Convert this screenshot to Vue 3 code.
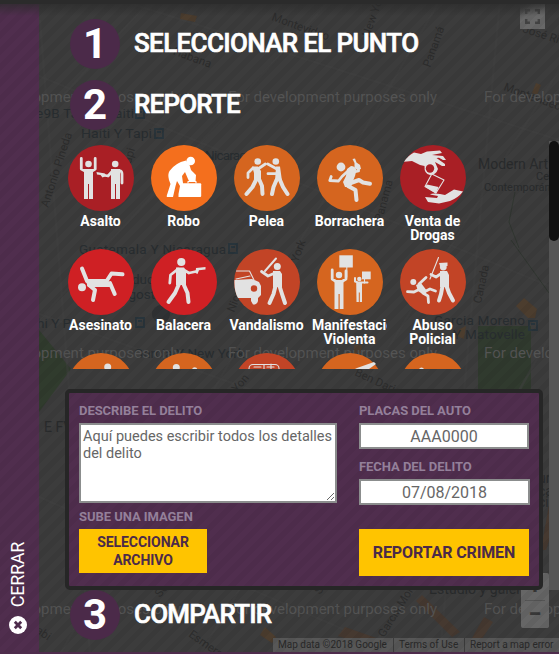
<script setup>
import { ref } from 'vue'

const description = ref('')
const plates = ref('')
const date = ref('07/08/2018')

const crimes = [
  { id: 'asalto', label: ['Asalto'], color: '#a91f25' },
  { id: 'robo', label: ['Robo'], color: '#f46f1d', active: true },
  { id: 'pelea', label: ['Pelea'], color: '#d5651f' },
  { id: 'borrachera', label: ['Borrachera'], color: '#d5651f' },
  { id: 'drogas', label: ['Venta de', 'Drogas'], color: '#a91f25' },
  { id: 'asesinato', label: ['Asesinato'], color: '#cf2024' },
  { id: 'balacera', label: ['Balacera'], color: '#cf2024' },
  { id: 'vandalismo', label: ['Vandalismo'], color: '#c24426' },
  { id: 'manifestacion', label: ['Manifestación', 'Violenta'], color: '#d5651f' },
  { id: 'abuso', label: ['Abuso', 'Policial'], color: '#c24426' },
  { id: 'r1', label: [], color: '#d5651f' },
  { id: 'r2', label: [], color: '#d5651f' },
  { id: 'r3', label: [], color: '#c24426' },
  { id: 'r4', label: [], color: '#d5651f' },
  { id: 'r5', label: [], color: '#d5651f' },
]

const watermarks = [-28, 228, 484]
const streets = [
  'M0 165L150 0', 'M30 330L330 0', 'M60 654L440 0', 'M200 654L559 70', 'M370 654L559 320',
  'M0 60L559 290', 'M120 0L559 140', 'M0 300L559 500', 'M0 480L400 654', 'M40 20L90 654', 'M500 0L440 654',
]
</script>

<template>
  <div class="app">
    <svg class="map" viewBox="0 0 559 654" width="559" height="654">
      <rect width="559" height="654" fill="#3c3c3c" />
      <path d="M39 330L71 369L39 412Z" fill="#303b2d" />
      <path d="M478 326H531V389H478Z" fill="#303a2e" />
      <path v-for="d in streets" :key="d" :d="d" class="street" />
      <path d="M511 240L549 293M515 192L509 222L519 248" stroke="#303630" fill="none" />
      <g fill="#4c3d2e">
        <path d="M181 13L197 16L195 22L180 19Z" />
        <path d="M536 83L541 85L537 95L532 93Z" />
        <path d="M524 298L537 309L535 318H528L516 306Z" />
        <path d="M458 330L466 326L464 339L457 336Z" />
        <path d="M265 627L276 637L272 643L260 635Z" />
        <path d="M354 345L362 345L361 353L354 353Z" />
      </g>
      <g fill="#463930">
        <path d="M345 627L382 640L377 648L338 636ZM484 617L493 622L478 645H468ZM422 595L460 632L452 637L416 601Z" />
        <path d="M549 505L559 510L546 550L541 550Z" />
      </g>
      <g class="place">
        <text x="36" y="118" textLength="98">e9B Tapi Y Haiti</text>
        <text x="81" y="138" textLength="71" lengthAdjust="spacingAndGlyphs">Haiti Y Tapi</text>
        <text x="162" y="160" textLength="98">nama Y Nicaragua</text>
        <text x="79" y="254" textLength="147">Guatemala Y Nicaragua</text>
        <text x="79" y="284">Unidad Educativa</text>
        <text x="83" y="299">24 de Agosto</text>
        <text x="30" y="328">chi Y Panama</text>
        <text x="134" y="358">Garcia Y New York</text>
        <text x="434" y="325" textLength="91">Garcia Moreno</text>
        <text x="453" y="339" textLength="72">Y Matovelle</text>
      </g>
      <g class="poi">
        <text x="478" y="169" textLength="70">Modern Art</text>
        <text x="536" y="180" class="sm">Ce</text>
        <text x="484" y="191" class="sm">Contemporáneo</text>
        <text x="44" y="432">E FV</text>
        <text x="429" y="594" textLength="92">Estudio y galer</text>
        <text x="538" y="483">ur</text><text x="538" y="496">ca</text><text x="538" y="507">cio</text>
      </g>
      <g class="road">
        <text transform="translate(158 49) rotate(20)">La Habana</text>
        <text transform="translate(271 20) rotate(20)">Montevideo</text>
        <text transform="translate(503 90) rotate(20)">Montevideo</text>
        <text transform="translate(522 32) rotate(18)">José Rica</text>
        <text transform="translate(430 68) rotate(-70)">Panamá</text>
        <text transform="translate(369 38) rotate(-70)">New York</text>
        <text transform="translate(48 208) rotate(-72)">Antonio Pineda</text>
        <text transform="translate(129 170) rotate(-74)">Tapi</text>
        <text transform="translate(382 222) rotate(-75)">Panama</text>
        <text transform="translate(481 304) rotate(-78)">Canada</text>
        <text transform="translate(234 313) rotate(-68)">Nicaragua</text>
        <text transform="translate(298 263) rotate(-70)">York</text>
        <text transform="translate(354 375) rotate(25)">Ben Dario</text>
        <text transform="translate(237 393) rotate(-50)">Yon</text>
        <text transform="translate(188 636) rotate(35)">Esmeraldas</text>
        <text transform="translate(35 632) rotate(35)">abi</text>
        <text transform="translate(160 598) rotate(-50)">Seca</text>
        <text transform="translate(320 595) rotate(-55)">Sene</text>
        <text transform="translate(384 638) rotate(-58)">García Moreno</text>
      </g>
      <g class="station">
        <path d="M155 129h8v9h-8zM136 109h8v9h-8zM229 244h8v9h-8zM529 321h8v9h-8zM136 318h8v9h-8z" />
        <path d="M157 132h4M138 112h4M231 247h4M531 324h4M138 321h4" />
      </g>
      <circle cx="161" cy="314" r="9" fill="#303234" />
      <text v-for="x in watermarks" :key="'a' + x" :x="x" y="102" class="watermark" textLength="209">For development purposes only</text>
      <text v-for="x in watermarks" :key="'b' + x" :x="x" y="358" class="watermark" textLength="209">For development purposes only</text>
      <text v-for="x in watermarks" :key="'c' + x" :x="x" y="614" class="watermark" textLength="209">For development purposes only</text>
    </svg>

    <div class="fullscreen">
      <svg width="25" height="25" viewBox="0 0 25 25"><path d="M6.2 10V6.2H10M15 6.2H18.8V10M18.8 15V18.8H15M10 18.8H6.2V15" /></svg>
    </div>
    <div class="zoom"><span>+</span><i></i><span>−</span></div>
    <div class="credits"><span>Map data ©2018 Google</span><span>Terms of Use</span><span>Report a map error</span></div>
    <div class="stripes"></div>

    <aside class="close">
      <span class="close-text">CERRAR</span>
      <svg width="18" height="18" viewBox="0 0 18 18"><circle cx="9" cy="9" r="9" fill="#fff" /><path d="M5.8 5.8L12.2 12.2M12.2 5.8L5.8 12.2" stroke="#4e2c4c" stroke-width="2.8" /></svg>
    </aside>

    <main class="panel">
      <header class="step"><b class="num">1</b><h2>SELECCIONAR EL PUNTO</h2></header>
      <header class="step second"><b class="num">2</b><h2>REPORTE</h2></header>

      <section class="crimes">
        <div v-for="c in crimes" :key="c.id" class="crime">
          <svg width="66" height="66" viewBox="0 0 66 66" class="icon" :class="{ active: c.active }">
            <circle cx="33" cy="33" r="33" :fill="c.color" />
            <g v-if="c.id === 'asalto'">
              <circle cx="20.5" cy="19" r="3.3" class="f" />
              <path class="f" d="M16 24H25V54H21V39H20V54H16ZM43 24H52V54H48V39H47V54H43Z" />
              <path class="l3" d="M13.3 13.5V24L17 26M27.2 13.5V24L24 26M51.5 25.5Q54 26 54 29V38M45 25.5L40 31L35 30" />
              <path class="f" d="M28.5 27L37 28.5L38 31L34.5 32.5L32.5 30L29 29.5Z" />
              <circle cx="47.2" cy="19" r="3.3" class="f" />
            </g>
            <g v-else-if="c.id === 'robo'">
              <circle cx="39.7" cy="16" r="4.3" class="f" />
              <path class="f" d="M35 15.5Q24 18 18.5 26Q16.5 29 18 35L19.5 39L15.8 50.5V52H22L24.5 41L26 36L29 41L27.5 49V52H32V38L31 31L34 27L37 34L38.5 37H44.5L45 30L40 25L38.5 20Z" />
              <rect x="31.2" y="38.3" width="19" height="13.7" rx="1" class="f" />
              <path d="M37 38V36.5H45V38" class="l1" />
            </g>
            <g v-else-if="c.id === 'pelea'">
              <circle cx="23.7" cy="16.5" r="3.3" class="f" /><circle cx="41.8" cy="16.5" r="3.3" class="f" />
              <path class="f" d="M18 21.5H24L27 26V36H20V28Z M42 21.5H46L48 36H41Z" />
              <path class="l3" d="M19 23L14 28V32.5M24 24L31.3 19M33.8 19L42 23.5M34 28.7H42" />
              <path class="l4" d="M22 35L18.5 42L12.5 49M25 34L28 41L28.5 49M42.5 35L39.5 42L38 49M46 35L49 42L53.5 49" />
            </g>
            <g v-else-if="c.id === 'borrachera'">
              <circle cx="24" cy="22" r="4.4" class="f" />
              <path class="f" d="M34 21Q38 21 39.5 25L38 31L36 36L34 42H28L26 37L29 31L30 24Z" />
              <path class="l3" d="M31 26L25 31.5L21.5 36L12.8 35.5L14.2 31.5M37 27L41.5 26V21" />
              <path class="f" d="M35.5 14L38 13.5L39.5 17.5L43 20L44 24L40.5 25L37.5 23V18Z" />
              <path class="l4" d="M31 39L42 35L46 37.5L53 38.7M31 41L38.5 45L39.5 55" />
            </g>
            <g v-else-if="c.id === 'drogas'">
              <path class="f" d="M4 16.8Q8 10.5 14 7.5L21 9L27 6.5L40 5.5L42 8L32 10L43 11L46 15H43L39 12.8L36.5 13L45 19V21H42L35 17L38 24Q36 30 30 30Q24 29 24.5 21L20 20L12 16Z" />
              <circle cx="30" cy="23.5" r="4.2" :fill="c.color" />
              <path class="l1" d="M31.8 29L44 35L36 48L25 41.5Z" /><path class="f" d="M27 39.5L38.5 42L36 48.5L25 41.5Z" />
              <path class="f" d="M25 52L37 53L38 51L30 49.5Q32 48 40 49L45 50L54 44.5L63 46.5Q58 53 50 56L39 58.5L28 57Z" />
            </g>
            <g v-else-if="c.id === 'asesinato'">
              <circle cx="14" cy="38.3" r="4" class="f" />
              <path class="f" d="M17 30H38L44 36L42 38H20Z" />
              <path class="l4" d="M14 19.5L19 32M21 36L27 41L25 51M38 33L43.5 24.5L54.5 25.3M42 34L46.7 45" />
            </g>
            <g v-else-if="c.id === 'balacera'">
              <circle cx="30.3" cy="13" r="4.1" class="f" />
              <path class="f" d="M25 18.5H33L35 22V36H25Z" />
              <path class="l3" d="M27 20L19.5 26L18.8 34M32 20.5L38 24L45 22.5" />
              <path class="f" d="M45 19L54.5 18V20.5L48 21.3L46.5 25L44.5 24Z" />
              <path class="l4" d="M28 35L24 44L17.5 53M32 34L36.5 44L37.5 53" />
            </g>
            <g v-else-if="c.id === 'vandalismo'">
              <circle cx="43.3" cy="17.5" r="3.5" class="f" />
              <path class="l2" d="M31 22L42 9.5" />
              <path class="l3" d="M27.5 22.5L34 27L41 24" />
              <path class="f" d="M39 22H46L48 25V38H39Z" />
              <path class="l4" d="M41.5 37L39.5 45L35.5 54M45.5 37L48 45L51 54" />
              <path class="l1" d="M2.5 22H15.5L20 31M2 30L16 27" />
              <path class="f" d="M.5 31L18 30L25 33L27 37V46L24 49V52Q23 56 19 55.5L17 52V49H4Q0 42 .5 31Z" />
              <circle cx="20" cy="39.5" r="3.2" :fill="c.color" />
            </g>
            <g v-else-if="c.id === 'manifestacion'">
              <rect x="22.3" y="6.3" width="13.5" height="12.2" class="f" /><path class="l1" d="M29.8 18V28" />
              <circle cx="22" cy="26" r="3.2" class="f" />
              <path class="f" d="M17.5 31H26.5V60H22.7V45H21.5V60H17.5Z" />
              <path class="l3" d="M15.2 21V30L19 32.5M29 22V30L25 32.5" />
              <rect x="45" y="22.5" width="8.7" height="7.8" class="f" /><path class="l1" d="M47.5 30V34" />
              <circle cx="42.3" cy="30" r="2.2" class="f" />
              <path class="f" d="M39.2 33H45V53H42.8V43.5H41.8V53H39.5Z" />
              <path class="l2" d="M50.5 33.6H42L38 32.5V29" />
            </g>
            <g v-else-if="c.id === 'abuso'">
              <circle cx="43.3" cy="18" r="3.4" class="f" /><path class="f" d="M39 14L47.5 13.5V17L40 17Z" />
              <path class="l1" d="M30 30L38.5 8.5" />
              <path class="f" d="M40 22H47L49 26V38H40Z" />
              <path class="l3" d="M31 25.5L36 28L42 24" />
              <path class="l4" d="M42.5 37L41 45L39 51.5M46.5 37L49 44L53 51.5" />
              <circle cx="13.3" cy="33" r="3" class="f" />
              <path class="f" d="M16 36L21 34L27 42L24 46L18 42Z" />
              <path class="l3" d="M19 35L26 28.5M18 41L14 43L7.5 42.7M24 43L30 40L35.5 42M23 44L28 47L28.5 53.5" />
            </g>
            <g v-else-if="c.id === 'r1'"><circle cx="39.7" cy="14" r="3.5" class="f" /></g>
            <g v-else-if="c.id === 'r2'"><circle cx="25.3" cy="14.5" r="3.5" class="f" /><circle cx="43.7" cy="17" r="2.7" class="f" /></g>
            <g v-else-if="c.id === 'r3'"><rect x="15" y="11.5" width="30" height="20" rx="4" class="l1" /><path class="l1" d="M20 14H27M33 14H40M30 12V16M37 11V16" /></g>
            <g v-else-if="c.id === 'r4'"><path class="f" d="M40 15L57 9L59 11L52 16H38Z" /></g>
            <g v-else><circle cx="21.5" cy="17" r="2.5" class="f" /></g>
          </svg>
          <p class="label"><span v-for="line in c.label" :key="line">{{ line }}</span></p>
        </div>
      </section>

      <form class="form" @submit.prevent>
        <div class="left">
          <label>DESCRIBE EL DELITO</label>
          <textarea v-model="description" placeholder="Aquí puedes escribir todos los detalles del delito"></textarea>
          <label class="image-label">SUBE UNA IMAGEN</label>
          <button type="button" class="file">SELECCIONAR<br />ARCHIVO</button>
        </div>
        <div class="right">
          <label>PLACAS DEL AUTO</label>
          <input v-model="plates" placeholder="AAA0000" />
          <label class="date-label">FECHA DEL DELITO</label>
          <input v-model="date" class="date" />
          <button class="send">REPORTAR CRIMEN</button>
        </div>
      </form>

      <header class="step third"><b class="num">3</b><h2>COMPARTIR</h2></header>
    </main>

    <div class="track"><div class="thumb"></div></div>
    <div class="top-shade"></div>
    <div class="bottom-bar"></div>
  </div>
</template>

<style>
body { margin: 0; overflow: hidden; background: #3b3b3b; }
</style>

<style scoped>
* { box-sizing: border-box; }
.app { position: relative; display: flex; width: 559px; height: 654px; overflow: hidden; font-family: Roboto, sans-serif; color: #fff; }
.map { position: absolute; left: 0; top: 0; }
.street { stroke: #404040; stroke-width: 2.5; fill: none; opacity: .5; }
.place { font-size: 13.5px; fill: #282d30; }
.poi { font-size: 14px; fill: #292b2c; }
.poi .sm { font-size: 11px; }
.road { font-size: 11.5px; fill: #2c2c2c; }
.station { stroke: #28343b; fill: none; stroke-width: 1.8; }
.watermark { font-family: Roboto, sans-serif; font-size: 15px; fill: #545454; }
.stripes { position: absolute; inset: 0; background: repeating-linear-gradient(135deg, rgba(0, 0, 0, .05) 0 5.6px, rgba(0, 0, 0, 0) 5.6px 11.3px); }
.fullscreen { position: absolute; left: 520px; top: 4px; width: 25px; height: 25px; background: linear-gradient(150deg, #3a3a3a, #686868 45%); }
.fullscreen svg { display: block; }
.fullscreen path { fill: none; stroke: #444; stroke-width: 2.4; }
.zoom { position: absolute; left: 521px; top: 573px; width: 28px; height: 55px; border-radius: 2px; background: #666; display: flex; flex-direction: column; align-items: center; font: bold 24px/27px Roboto, sans-serif; color: #373737; }
.zoom i { width: 20px; height: 1px; background: #545454; }
.credits { position: absolute; left: 273px; top: 638px; height: 14px; width: 286px; display: flex; gap: 1px; font-size: 10px; line-height: 14px; color: #292929; white-space: nowrap; }
.credits span { background: #575757; padding-left: 5px; width: 70px; }
.credits span:first-child { width: 120px; }
.credits span:last-child { width: 94px; }

.close { position: relative; width: 39px; flex: none; display: flex; flex-direction: column; align-items: center; justify-content: flex-end; gap: 9px; padding: 0 3px 20px 0; background: repeating-linear-gradient(135deg, #4d2c4b 0 5.6px, #502e4e 5.6px 11.3px); }
.close-text { writing-mode: vertical-rl; transform: rotate(180deg); font-size: 18px; line-height: 20px; letter-spacing: -.3px; }

.panel { position: relative; width: 510px; display: flex; flex-direction: column; padding: 19px 0 0 26px; }
.step { display: flex; align-items: center; height: 50px; padding-left: 5px; gap: 14px; flex: none; }
.second { margin-top: 11px; }
.num { width: 50px; height: 50px; border-radius: 50%; background: #4b2a49; text-align: center; font-size: 42px; line-height: 50px; font-weight: 700; }
h2 { margin: -2px 0 0; font-size: 26px; line-height: 30px; font-weight: 500; -webkit-text-stroke: .6px #fff; letter-spacing: -.65px; white-space: nowrap; }
.second h2, .third h2 { letter-spacing: -.8px; }

.crimes { display: grid; grid-template-columns: repeat(5, 75px); grid-auto-rows: 104px; column-gap: 8px; height: 224px; overflow: hidden; margin: 15px 0 0 -2px; flex: none; }
.crime { min-width: 0; display: flex; flex-direction: column; align-items: center; }
.icon { display: block; --ink: #e2e2e2; }
.icon.active { --ink: #fff; }
.f { fill: var(--ink); }
.l1, .l2, .l3, .l4 { fill: none; stroke: var(--ink); stroke-linecap: round; stroke-linejoin: round; stroke-width: 1.1; }
.l2 { stroke-width: 2; }
.l3 { stroke-width: 2.8; }
.l4 { stroke-width: 4; }
.label { margin: 3px 0 0; width: 75px; font-size: 14px; line-height: 14px; font-weight: 700; text-align: center; overflow-x: clip; overflow-y: visible; white-space: nowrap; }
.label span { display: block; }

.form { display: flex; gap: 22px; width: 478px; height: 201px; flex: none; margin-top: 20px; padding: 11px 10px; border: 4px solid #262626; border-radius: 5px; background: repeating-linear-gradient(135deg, #4d2c4b 0 5.6px, #502e4e 5.6px 11.3px); }
.left { width: 258px; display: flex; flex-direction: column; }
.right { width: 171px; display: flex; flex-direction: column; }
.left > *, .right > * { flex: none; }
label { height: 19px; font-size: 13px; line-height: 14px; font-weight: 700; letter-spacing: -.05px; color: #94809a; white-space: nowrap; }
textarea, input { font-family: Roboto, sans-serif; color: #666; background: #fff; border: 2px solid #8b8d8d; border-radius: 0; margin: 0; outline: 0; }
textarea { width: 258px; height: 80px; padding: 3px 2px 2px; font-size: 14.5px; line-height: 17px; overflow: hidden; }
input { width: 170px; height: 26px; padding: 1px 0 0; font-size: 16px; text-align: center; }
input.date { width: 171px; }
::placeholder { color: #666; opacity: 1; }
.image-label { margin-top: 7px; height: 19px; }
.date-label { margin-top: 11px; }
button { border: 0; border-radius: 0; padding: 0; background: #ffc400; color: #4b2a49; font-family: Roboto, sans-serif; font-weight: 700; }
.file { width: 128px; height: 44px; font-size: 14px; line-height: 18px; letter-spacing: -.07px; }
.send { width: 170px; height: 47px; margin-top: 24px; font-size: 16px; letter-spacing: -.12px; }

.track { position: absolute; left: 549px; top: 141px; width: 10px; height: 449px; background: #555; }
.thumb { height: 100px; border-radius: 5px; background: #111; }
.top-shade { position: absolute; left: 0; top: 0; width: 559px; height: 16px; background: linear-gradient(#2b2b2b 0 4px, rgba(43, 43, 43, .7) 4px, rgba(43, 43, 43, 0)); }
.bottom-bar { position: absolute; left: 0; bottom: 0; width: 559px; height: 2px; background: #4e2c4c; }
</style>
